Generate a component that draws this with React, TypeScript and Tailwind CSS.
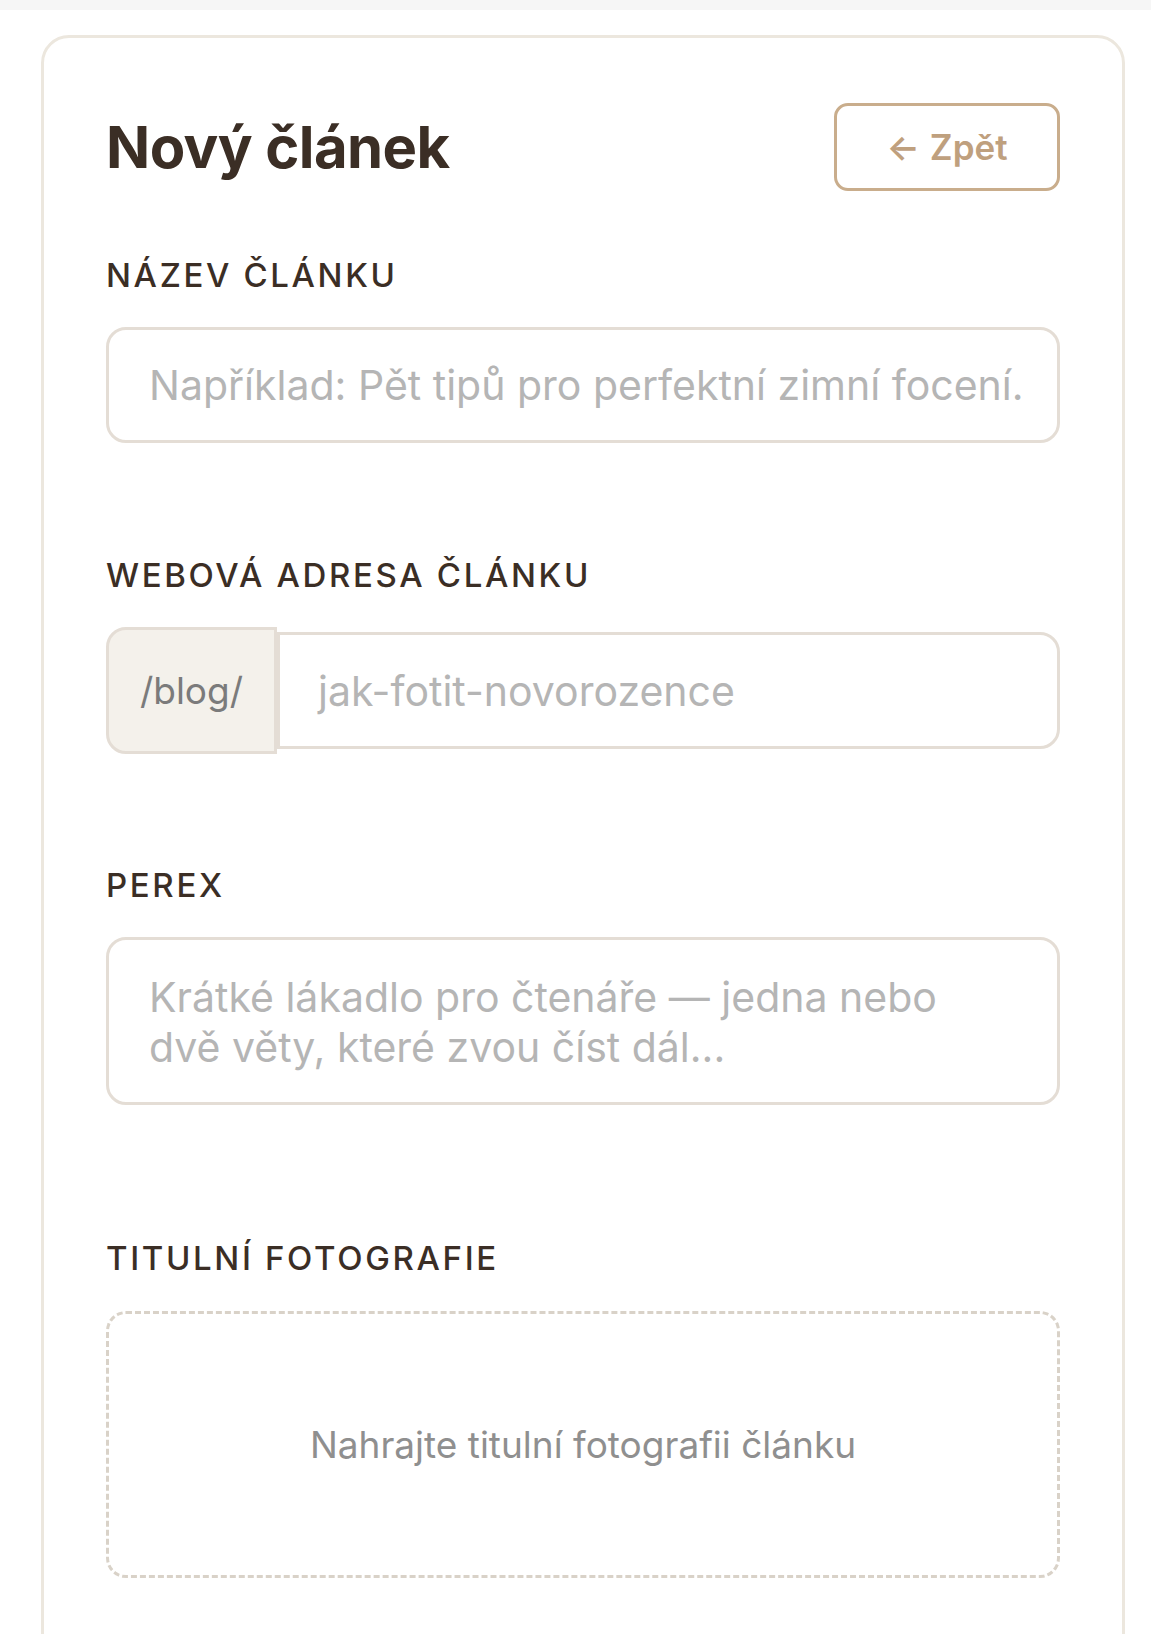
import React from "react";

const Label = ({ children, className = "" }: { children: React.ReactNode; className?: string }) => (
  <div className={`text-[33px] leading-[40px] font-medium tracking-[0.08em] text-[#3b2e25] ${className}`}>
    {children}
  </div>
);

export default function App() {
  return (
    <div
      className="min-h-screen bg-white"
      style={{ fontFamily: "Inter, 'Noto Sans', sans-serif" }}
    >
      <div className="h-[10px] bg-[#f6f6f6]" />
      <div className="ml-[41px] mt-[25px] w-[1084px] rounded-[28px] border-[3px] border-[#ece7de] px-[62px] pt-[65px] pb-[90px]">
        <div className="flex h-[88px] items-center justify-between">
          <h1 className="text-[58px] font-bold leading-none tracking-[-0.01em] text-[#3b2e25]">
            Nový článek
          </h1>
          <button className="flex h-[88px] w-[226px] items-center justify-center gap-[10px] rounded-[14px] border-[3px] border-[#c9ad8c] text-[35px] font-semibold text-[#bfa07e]">
            <span className="leading-none">←</span>
            <span className="leading-none">Zpět</span>
          </button>
        </div>

        <Label className="mt-[64px]">NÁZEV ČLÁNKU</Label>
        <div className="mt-[32px] flex h-[116px] items-center rounded-[20px] border-[3px] border-[#e4ddd5] px-[40px]">
          <span className="text-[41px] leading-[50px] text-[#b5b5b5] whitespace-nowrap">
            Například: Pět tipů pro perfektní zimní focení.
          </span>
        </div>

        <Label className="mt-[112px]">WEBOVÁ ADRESA ČLÁNKU</Label>
        <div className="mt-[32px] flex items-center">
          <div className="flex h-[127px] w-[171px] shrink-0 items-center justify-center rounded-l-[20px] border-[3px] border-[#e4ddd5] bg-[#f4f1eb] text-[37px] leading-[50px] text-[#7b7b7b]">
            /blog/
          </div>
          <div className="flex h-[117px] flex-1 items-center rounded-r-[20px] border-[3px] border-[#e4ddd5] px-[38px]">
            <span className="text-[41px] leading-[50px] text-[#b5b5b5]">jak-fotit-novorozence</span>
          </div>
        </div>

        <Label className="mt-[111px]">PEREX</Label>
        <div className="mt-[32px] h-[168px] rounded-[20px] border-[3px] border-[#e4ddd5] px-[40px] pt-[32px]">
          <p className="text-[41px] leading-[50px] text-[#b5b5b5]">
            Krátké lákadlo pro čtenáře — jedna nebo
            <br />
            dvě věty, které zvou číst dál...
          </p>
        </div>

        <Label className="mt-[133px]">TITULNÍ FOTOGRAFIE</Label>
        <div className="mt-[33px] flex h-[267px] items-center justify-center rounded-[20px] border-[3px] border-dashed border-[#d9d2c8]">
          <span className="text-[37px] leading-[48px] text-[#8f8f8f]">
            Nahrajte titulní fotografii článku
          </span>
        </div>
      </div>
    </div>
  );
}
